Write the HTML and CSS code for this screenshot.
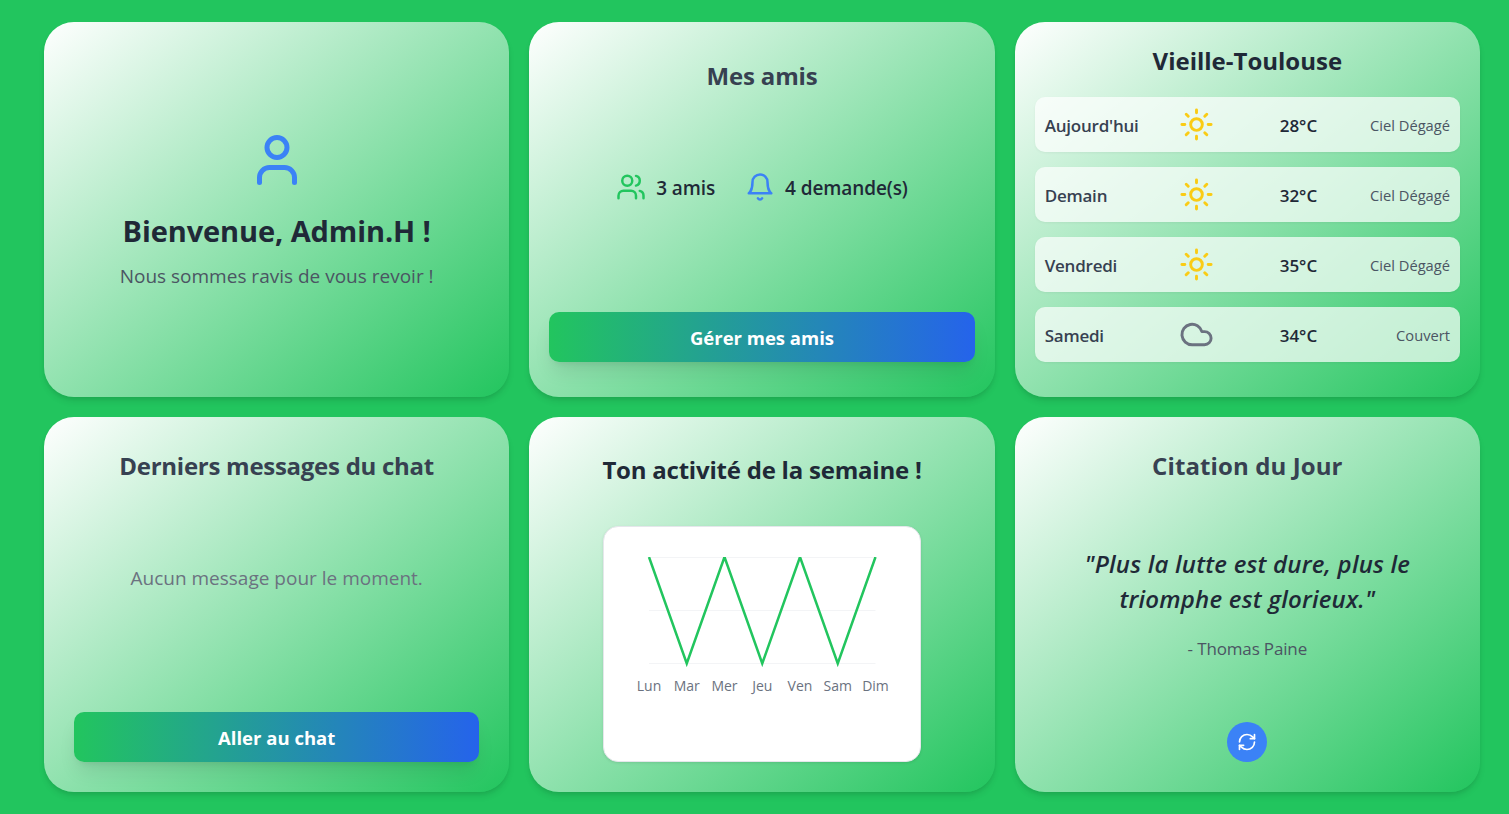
FILE: index.html
```html
<!DOCTYPE html>
<html lang="fr">
<head>
<meta charset="utf-8">
<title>Tableau de bord</title>
<link rel="stylesheet" href="styles.css">
</head>
<body>
<main class="dashboard">
  <section class="card welcome">
    <svg class="icon welcome-icon" viewBox="0 0 24 24"><path d="M19 21v-2a4 4 0 0 0-4-4H9a4 4 0 0 0-4 4v2"/><circle cx="12" cy="7" r="4"/></svg>
    <h1 class="welcome-title">Bienvenue, Admin.H !</h1>
    <p class="welcome-text">Nous sommes ravis de vous revoir !</p>
  </section>

  <section class="card friends">
    <h2 class="title title-soft friends-title">Mes amis</h2>
    <div class="stats">
      <div class="stat"><svg class="icon stat-icon green" viewBox="0 0 24 24"><path d="M16 21v-2a4 4 0 0 0-4-4H6a4 4 0 0 0-4 4v2"/><circle cx="9" cy="7" r="4"/><path d="M22 21v-2a4 4 0 0 0-3-3.87"/><path d="M16 3.13a4 4 0 0 1 0 7.75"/></svg><span class="stat-text">3 amis</span></div>
      <div class="stat"><svg class="icon stat-icon blue" viewBox="0 0 24 24"><path d="M6 8a6 6 0 0 1 12 0c0 7 3 9 3 9H3s3-2 3-9"/><path d="M10.3 21a1.94 1.94 0 0 0 3.4 0"/></svg><span class="stat-text">4 demande(s)</span></div>
    </div>
    <button class="button">Gérer mes amis</button>
  </section>

  <section class="card weather">
    <h2 class="title weather-title">Vieille-Toulouse</h2>
    <ul class="forecast">
      <li class="day"><span class="day-name">Aujourd'hui</span><svg class="icon day-icon sun" viewBox="0 0 24 24"><circle cx="12" cy="12" r="4"/><path d="M12 2v2M12 20v2M4.93 4.93l1.41 1.41M17.66 17.66l1.41 1.41M2 12h2M20 12h2M6.34 17.66l-1.41 1.41M19.07 4.93l-1.41 1.41"/></svg><span class="temp">28°C</span><span class="sky">Ciel Dégagé</span></li>
      <li class="day"><span class="day-name">Demain</span><svg class="icon day-icon sun" viewBox="0 0 24 24"><circle cx="12" cy="12" r="4"/><path d="M12 2v2M12 20v2M4.93 4.93l1.41 1.41M17.66 17.66l1.41 1.41M2 12h2M20 12h2M6.34 17.66l-1.41 1.41M19.07 4.93l-1.41 1.41"/></svg><span class="temp">32°C</span><span class="sky">Ciel Dégagé</span></li>
      <li class="day"><span class="day-name">Vendredi</span><svg class="icon day-icon sun" viewBox="0 0 24 24"><circle cx="12" cy="12" r="4"/><path d="M12 2v2M12 20v2M4.93 4.93l1.41 1.41M17.66 17.66l1.41 1.41M2 12h2M20 12h2M6.34 17.66l-1.41 1.41M19.07 4.93l-1.41 1.41"/></svg><span class="temp">35°C</span><span class="sky">Ciel Dégagé</span></li>
      <li class="day"><span class="day-name">Samedi</span><svg class="icon day-icon cloud" viewBox="0 0 24 24"><path d="M17.5 19H9a7 7 0 1 1 6.71-9h1.79a4.5 4.5 0 1 1 0 9Z"/></svg><span class="temp">34°C</span><span class="sky">Couvert</span></li>
    </ul>
  </section>

  <section class="card chat">
    <h2 class="title title-soft chat-title">Derniers messages du chat</h2>
    <p class="empty">Aucun message pour le moment.</p>
    <button class="button">Aller au chat</button>
  </section>

  <section class="card activity">
    <h2 class="title activity-title">Ton activité de la semaine !</h2>
    <div class="chart">
      <svg class="plot" viewBox="0 0 316 234">
        <path class="gridline" d="M45 30.5H271.5M45 83.5H271.5M45 136.5H271.5"/>
        <svg x="0" y="30" width="316" height="110" viewBox="0 30 316 110"><polyline class="series" points="45,30 82.75,136.5 120.5,30 158.25,136.5 196,30 233.75,136.5 271.5,30"/></svg>
        <g class="labels"><text x="45" y="164">Lun</text><text x="82.75" y="164">Mar</text><text x="120.5" y="164">Mer</text><text x="158.25" y="164">Jeu</text><text x="196" y="164">Ven</text><text x="233.75" y="164">Sam</text><text x="271.5" y="164">Dim</text></g>
      </svg>
    </div>
  </section>

  <section class="card quote">
    <h2 class="title title-soft quote-title">Citation du Jour</h2>
    <blockquote class="quote-text">"Plus la lutte est dure, plus le<br>triomphe est glorieux."</blockquote>
    <p class="author">- Thomas Paine</p>
    <button class="refresh" aria-label="Nouvelle citation"><svg class="icon refresh-icon" viewBox="0 0 24 24"><path d="M3 12a9 9 0 0 1 9-9 9.75 9.75 0 0 1 6.74 2.74L21 8"/><path d="M21 3v5h-5"/><path d="M21 12a9 9 0 0 1-9 9 9.75 9.75 0 0 1-6.74-2.74L3 16"/><path d="M8 16H3v5"/></svg></button>
  </section>
</main>
</body>
</html>
```
FILE: styles.css
```css
* { box-sizing: border-box; margin: 0; padding: 0; }
body { background: #22c55e; font-family: "Open Sans", "Noto Sans", sans-serif; color: #1f2937; }
button { border: 0; font-family: inherit; }
.dashboard { display: grid; grid-template-columns: repeat(3, 1fr); grid-auto-rows: 375px; gap: 20px; height: 814px; padding: 22px 29px 22px 44px; overflow: hidden; }
.card { display: flex; flex-direction: column; align-items: center; border-radius: 30px; background: linear-gradient(to bottom right, #fff, #22c55e); box-shadow: 0 5px 7.5px -1px rgba(0,0,0,.1), 0 2.5px 5px -2.5px rgba(0,0,0,.1); text-align: center; white-space: nowrap; }
.icon { display: block; fill: none; stroke: currentColor; stroke-width: 2; stroke-linecap: round; stroke-linejoin: round; }
.title { font-size: 24px; line-height: 35px; font-weight: 700; }
.title-soft { color: #374151; }
.welcome { padding-top: 108px; }
.welcome-icon { width: 60px; height: 60px; color: #3b82f6; }
.welcome-title { margin-top: 18px; font-size: 29px; line-height: 45px; font-weight: 700; letter-spacing: -.1px; }
.welcome-text { margin-top: 8px; font-size: 19px; line-height: 30px; color: #4b5563; }
.friends { padding: 36px 20px 35px; }
.friends-title { letter-spacing: -.15px; }
.stats { display: flex; gap: 30px; margin-top: 79px; }
.stat { display: flex; align-items: center; gap: 10px; height: 30px; font-size: 19px; font-weight: 600; }
.stat-text { padding-top: 2px; letter-spacing: -.1px; }
.stat-icon { width: 30px; height: 30px; }
.green { color: #22c55e; }
.blue { color: #3b82f6; }
.button { width: 100%; height: 50px; margin-top: auto; padding-top: 1px; border-radius: 10px; background: linear-gradient(to right, #22c55e, #2563eb); color: #fff; font-size: 18.5px; line-height: 30px; font-weight: 700; box-shadow: 0 12.5px 19px -4px rgba(0,0,0,.1), 0 5px 7.5px -5px rgba(0,0,0,.1); }
.weather { padding: 21px 20px; }
.forecast { display: grid; gap: 15px; width: 100%; margin-top: 19px; list-style: none; }
.day { display: grid; grid-template-columns: 134px 35px 65px 1fr; align-items: center; height: 55px; padding: 0 10px; border-radius: 10px; background: rgba(255,255,255,.7); box-shadow: 0 1px 2.5px rgba(0,0,0,.05); font-size: 17px; }
.day-name { justify-self: start; padding-top: 1px; color: #374151; font-weight: 600; letter-spacing: -.22px; }
.day-icon { width: 35px; height: 35px; }
.sun { color: #facc15; }
.cloud { color: #6b7280; }
.temp { justify-self: start; padding-top: 1px; margin-left: 66px; font-weight: 600; }
.day { grid-template-columns: 134px 35px 103px 1fr; }
.sky { justify-self: end; padding-top: 1px; color: #4b5563; font-size: 14.7px; }
.chat { padding: 31px 30px 30px; }
.chat-title { letter-spacing: -.27px; }
.empty { margin-top: 80px; color: #6b7280; font-size: 19px; line-height: 30px; }
.activity { padding-top: 35px; }
.activity-title { letter-spacing: -.22px; }
.chart { width: 318px; height: 236px; margin-top: 39px; border: 1px solid #e5e7eb; border-radius: 15px; background: #fff; box-shadow: 0 1px 3px rgba(0,0,0,.1); }
.plot { display: block; width: 316px; height: 234px; }
.gridline { fill: none; stroke: #f3f4f6; stroke-width: 1; }
.series { fill: none; stroke: #22c55e; stroke-width: 2.5; }
.labels { fill: #6b7280; font-size: 14px; text-anchor: middle; }
.quote { padding: 31px 30px 30px; }
.quote-title { letter-spacing: .1px; }
.quote-text { margin-top: 63px; font-size: 24px; line-height: 35px; font-style: italic; font-weight: 600; letter-spacing: .2px; }
.author { margin-top: 20px; color: #4b5563; font-size: 17px; line-height: 25px; letter-spacing: -.15px; }
.refresh { display: grid; place-items: center; width: 40px; height: 40px; margin-top: auto; border-radius: 50%; background: #3b82f6; color: #fff; }
.refresh-icon { width: 20px; height: 20px; }
```
